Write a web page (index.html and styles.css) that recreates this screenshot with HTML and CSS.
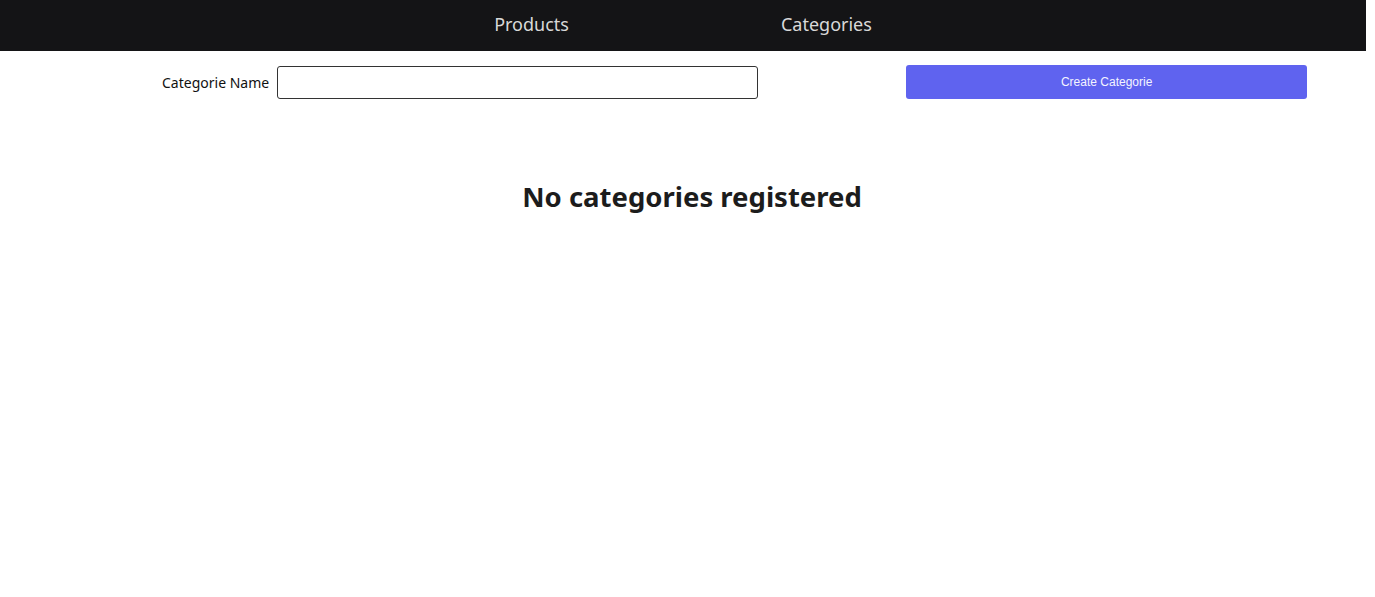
FILE: index.html
```html
<!DOCTYPE html>
<html lang="en">
<head>
<meta charset="utf-8">
<title>Categories</title>
<link rel="stylesheet" href="styles.css">
</head>
<body>
<header class="topbar">
  <nav class="nav">
    <a class="nav-link" href="#">Products</a>
    <a class="nav-link" href="#">Categories</a>
  </nav>
</header>
<main class="page">
  <form class="create-form">
    <label class="field-label" for="name">Categorie Name</label>
    <input class="field-input" id="name" type="text">
    <button class="create-btn" type="button">Create Categorie</button>
  </form>
  <h1 class="empty">No categories registered</h1>
</main>
</body>
</html>
```
FILE: styles.css
```css
* { box-sizing: border-box; }
html, body { margin: 0; padding: 0; background: #fff; }
body { font-family: "Noto Sans", "Open Sans", sans-serif; color: #111; }
.topbar {
  width: 1366px;
  height: 51px;
  background: #141416;
  display: flex;
  justify-content: center;
  align-items: center;
}
.nav { display: flex; gap: 212px; padding-bottom: 4px; }
.nav-link {
  color: #d9d9d9;
  text-decoration: none;
  font-size: 18px;
}
.page { width: 1366px; }
.create-form {
  display: flex;
  align-items: center;
  padding: 14px 0 0 162px;
  height: 48px;
}
.field-label { font-size: 14px; color: #111; margin-right: 8px; }
.field-input {
  width: 481px;
  height: 33px;
  border: 1px solid #333;
  border-radius: 3px;
  margin-right: 148px;
  font: inherit;
  margin-top: 1px;
}
.create-btn {
  width: 401px;
  height: 34px;
  background: #5f63ef;
  border: none;
  border-radius: 3px;
  color: #f4f4ff;
  font-family: "Liberation Sans", Arial, sans-serif;
  font-size: 12px;
}
.empty {
  margin: 79px 0 0;
  text-align: center;
  font-size: 27.5px;
  font-weight: 700;
  color: #1c1c1c;
  padding-left: 18px;
}
```
